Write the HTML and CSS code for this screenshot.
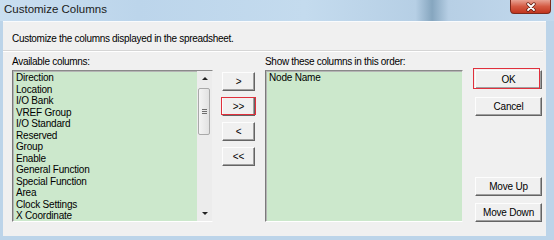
FILE: index.html
```html
<!DOCTYPE html>
<html lang="en">
<head>
    <meta charset="UTF-8">
    <meta name="viewport" content="width=device-width, initial-scale=1.0">
    <title>Customize Columns</title>
    <link rel="stylesheet" href="styles.css">
</head>
<body>
    <div class="titlebar">
        <span class="title">Customize Columns</span>
        <div class="close-btn">
            <svg width="12" height="10" viewBox="0 0 12 10">
                <path d="M3 2 L9 8 M9 2 L3 8" stroke="#5a1a10" stroke-width="3.2" stroke-linecap="round"/>
                <path d="M3 2 L9 8 M9 2 L3 8" stroke="#fff" stroke-width="1.8" stroke-linecap="round"/>
            </svg>
        </div>
    </div>
    <div class="client">
        <p class="intro">Customize the columns displayed in the spreadsheet.</p>
        <div class="separator"></div>
        <div class="main">
            <div class="list-col left-col">
                <div class="label">Available columns:</div>
                <div class="listbox">
                    <ul class="items">
                        <li>Direction</li>
                        <li>Location</li>
                        <li>I/O Bank</li>
                        <li>VREF Group</li>
                        <li>I/O Standard</li>
                        <li>Reserved</li>
                        <li>Group</li>
                        <li>Enable</li>
                        <li>General Function</li>
                        <li>Special Function</li>
                        <li>Area</li>
                        <li>Clock Settings</li>
                        <li>X Coordinate</li>
                    </ul>
                    <div class="scrollbar">
                        <div class="arrow"><span class="tri-up"></span></div>
                        <div class="thumb"><span class="grip"></span></div>
                        <div class="track"></div>
                        <div class="arrow"><span class="tri-down"></span></div>
                    </div>
                </div>
            </div>
            <div class="move-buttons">
                <button class="btn">&gt;</button>
                <button class="btn marked">&gt;&gt;</button>
                <button class="btn">&lt;</button>
                <button class="btn">&lt;&lt;</button>
            </div>
            <div class="list-col right-col">
                <div class="label">Show these columns in this order:</div>
                <div class="listbox">
                    <ul class="items">
                        <li>Node Name</li>
                    </ul>
                </div>
            </div>
            <div class="action-buttons">
                <div class="group">
                    <button class="btn ok">OK</button>
                    <button class="btn">Cancel</button>
                </div>
                <div class="group">
                    <button class="btn">Move Up</button>
                    <button class="btn">Move Down</button>
                </div>
            </div>
        </div>
    </div>
</body>
</html>
```

FILE: styles.css
```css
body {
    margin: 0;
    width: 554px;
    height: 240px;
    overflow: hidden;
    background-color: #bcd4e9;
    font-family: "Liberation Sans", Arial, sans-serif;
    font-size: 10px;
    color: #000;
}
.titlebar {
    height: 21px;
    display: flex;
    align-items: flex-start;
    background: linear-gradient(90deg, #c9def0 0%, #bcd5eb 25%, #c4dbee 55%, #b6cfe5 75%, #86a6bf 78%, #b7cfe5 81%, #c2d9ed 100%);
}
.title {
    padding: 3px 0 0 4px;
    font-size: 11.5px;
    line-height: 12px;
    color: #1a1a1a;
}
.close-btn {
    margin-left: auto;
    margin-right: 3px;
    width: 41px;
    height: 14px;
    box-sizing: border-box;
    background: linear-gradient(#e8a293, #d45a43 50%, #c1361f);
    border: 1px solid #7d2a1d;
    border-top: none;
    border-radius: 0 0 4px 4px;
    display: flex;
    align-items: center;
    justify-content: center;
}
.client {
    margin: 0 8px 0 3px;
    height: 215px;
    box-sizing: border-box;
    background-color: #f0f0f0;
    border-top: 1px solid #f9fbfd;
}
.intro {
    margin: 0;
    padding: 11px 0 0 9px;
    line-height: 12px;
    letter-spacing: -0.3px;
}
.separator {
    margin: 5px 3px 0 0;
    height: 1px;
    background-color: #d5d5d5;
    border-bottom: 1px solid #fff;
}
.main {
    display: flex;
    align-items: flex-start;
    padding-left: 9px;
    margin-top: 4px;
}
.label {
    height: 12px;
    line-height: 12px;
    margin-bottom: 2px;
    letter-spacing: -0.3px;
    white-space: nowrap;
}
.left-col {
    width: 201px;
}
.right-col {
    width: 198px;
    margin-left: 10px;
}
.listbox {
    height: 152px;
    box-sizing: border-box;
    display: flex;
    background-color: #cce8cc;
    border: 1px solid;
    border-color: #8a8a8a #f0f0f0 #fff #7a7a7a;
    box-shadow: inset 1px 1px 0 #b4b4b4;
    overflow: hidden;
}
.items {
    flex: 1;
    list-style: none;
    margin: 0;
    padding: 1px 0 0 3px;
    line-height: 11.5px;
    letter-spacing: -0.2px;
    white-space: nowrap;
    overflow: hidden;
}
.scrollbar {
    width: 15px;
    display: flex;
    flex-direction: column;
    background-color: #ececec;
}
.arrow {
    height: 15px;
    display: flex;
    align-items: center;
    justify-content: center;
}
.tri-up {
    border-left: 3px solid transparent;
    border-right: 3px solid transparent;
    border-bottom: 3px solid #222;
}
.tri-down {
    border-left: 3px solid transparent;
    border-right: 3px solid transparent;
    border-top: 3px solid #222;
}
.thumb {
    height: 47px;
    margin: 2px 2px 0 1px;
    box-sizing: border-box;
    background: linear-gradient(90deg, #f4f4f4, #e2e2e2);
    border: 1px solid #a9a9a9;
    border-radius: 2px;
    display: flex;
    align-items: center;
    justify-content: center;
}
.grip {
    width: 5px;
    height: 5px;
    background: repeating-linear-gradient(#6e6e6e 0 1px, transparent 1px 2px);
}
.track {
    flex: 1;
}
.btn {
    position: relative;
    display: block;
    box-sizing: border-box;
    height: 19px;
    padding: 0;
    font-family: inherit;
    font-size: 10px;
    letter-spacing: -0.2px;
    color: #000;
    background-color: #f0f0f0;
    border: 1px solid;
    border-color: #fdfdfd #646464 #646464 #fdfdfd;
    box-shadow: inset -1px -1px 0 #a0a0a0;
}
.move-buttons {
    margin-left: 9px;
    padding-top: 16px;
    display: flex;
    flex-direction: column;
    gap: 6px;
}
.move-buttons .btn {
    width: 33px;
}
.action-buttons {
    margin-left: 12px;
    padding-top: 14px;
    height: 166px;
    box-sizing: border-box;
    display: flex;
    flex-direction: column;
    justify-content: space-between;
}
.action-buttons .group {
    display: flex;
    flex-direction: column;
    gap: 7px;
}
.action-buttons .group:first-child {
    gap: 8px;
}
.action-buttons .btn {
    width: 67px;
}
.marked::after {
    content: "";
    position: absolute;
    left: -2px;
    top: -1px;
    right: -2px;
    bottom: 0;
    border: 1px solid #e0303c;
}
.ok::after {
    content: "";
    position: absolute;
    left: -3px;
    top: -3px;
    width: 65px;
    height: 19px;
    border: 1px solid #e0303c;
}
```
